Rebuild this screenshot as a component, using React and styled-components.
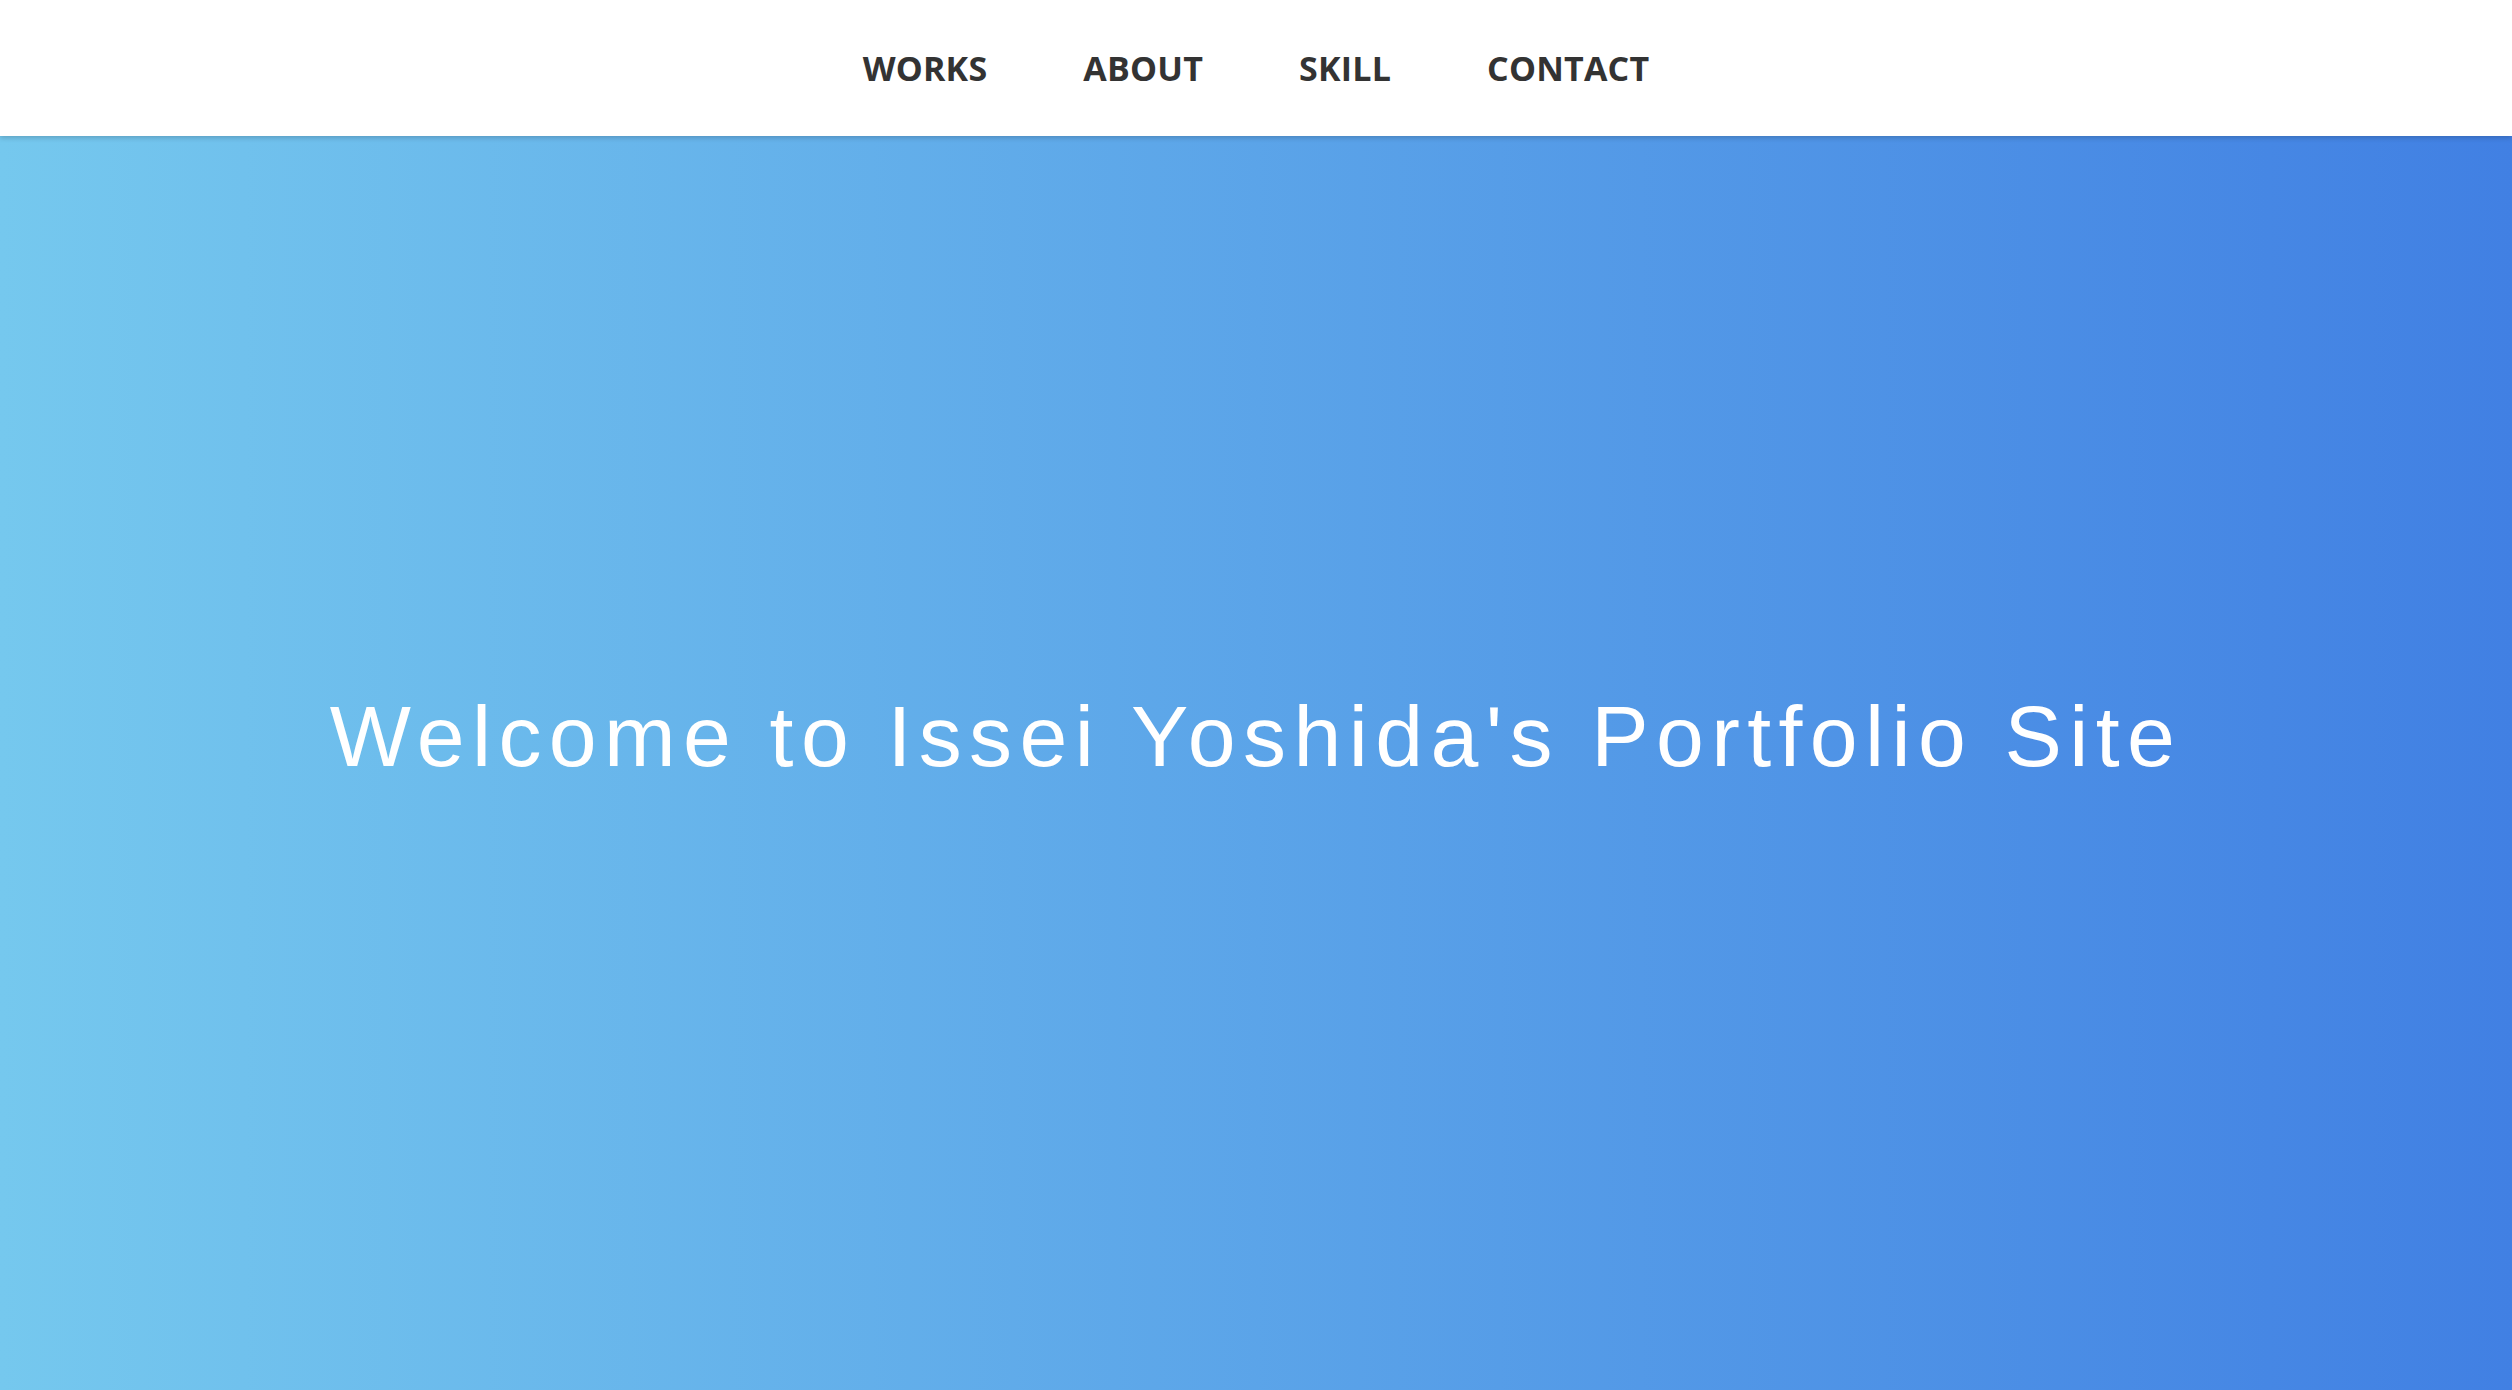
import React from "react";
import styled, { createGlobalStyle } from "styled-components";

const GlobalStyle = createGlobalStyle`
  html, body {
    margin: 0;
    padding: 0;
  }
  body {
    font-family: "Open Sans", "Liberation Sans", sans-serif;
    overflow: hidden;
  }
`;

const navItems = ["WORKS", "ABOUT", "SKILL", "CONTACT"];

export default function App() {
  return (
    <Page>
      <GlobalStyle />
      <Header>
        <Nav>
          {navItems.map((item) => (
            <NavLink key={item} href={`#${item.toLowerCase()}`}>
              {item}
            </NavLink>
          ))}
        </Nav>
      </Header>
      <Hero>
        <Title>Welcome to Issei Yoshida's Portfolio Site</Title>
      </Hero>
    </Page>
  );
}

const Page = styled.div`
  width: 100%;
  height: 100vh;
  display: flex;
  flex-direction: column;
`;

const Header = styled.header`
  height: 136px;
  flex-shrink: 0;
  background: #fff;
  display: flex;
  align-items: center;
  justify-content: center;
  box-shadow: 0 2px 5px rgba(0, 0, 0, 0.18);
  position: relative;
  z-index: 1;
`;

const Nav = styled.nav`
  display: flex;
  align-items: center;
`;

const NavLink = styled.a`
  padding: 0 48px;
  font-family: "Open Sans", sans-serif;
  font-weight: 700;
  font-size: 34px;
  letter-spacing: 0.2px;
  color: #333;
  text-decoration: none;
`;

const Hero = styled.section`
  flex: 1;
  display: flex;
  align-items: center;
  justify-content: center;
  padding-bottom: 54px;
  background: linear-gradient(to right, #75c8ee 0%, #4180e3 100%);
`;

const Title = styled.h1`
  margin: 0;
  font-family: "Liberation Sans", Arial, sans-serif;
  font-weight: 400;
  font-size: 86px;
  letter-spacing: 7.4px;
  color: #fff;
  white-space: nowrap;
`;
